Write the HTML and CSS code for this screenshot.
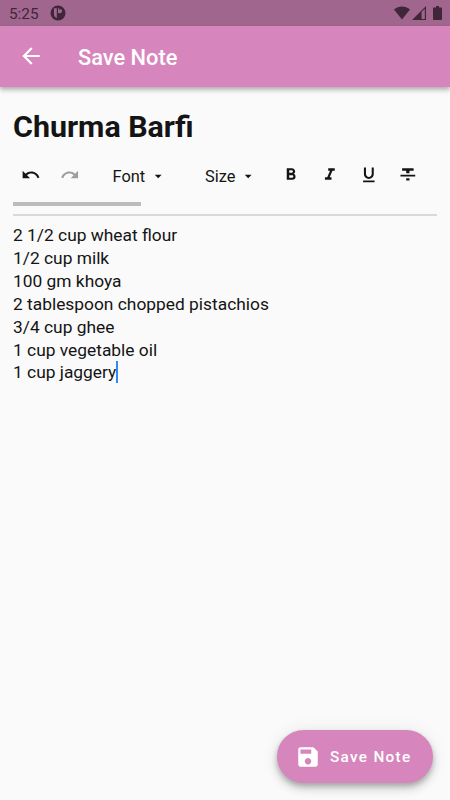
FILE: index.html
```
<!DOCTYPE html>
<html lang="en">

<head>
    <meta charset="UTF-8">
    <title>Save Note</title>
    <link rel="stylesheet" href="styles.css">
</head>

<body>
    <div class="status-bar">
        <span class="time">5:25</span>
        <svg class="app-dot" viewBox="0 0 16 16">
            <circle cx="8" cy="8" r="7.5" fill="#402638" />
            <path d="M4 3.2h2.8v9.8C5 12.5 4 11 4 9z" fill="#a0668e" />
            <path d="M8 3.2h1.2v1.3h2.6c.8 2-.3 3.8-2.2 3.8H8z" fill="#a0668e" />
        </svg>
        <div class="status-icons">
            <svg class="wifi" viewBox="0 0 16 14">
                <path d="M0 3.6C4.6-.5 11.4-.5 16 3.6L8 13.5z" />
            </svg>
            <svg class="signal" viewBox="0 0 14 14">
                <path fill-rule="evenodd" d="M14 0v14H0zM9.6 6v7h3.2V2.8z" />
            </svg>
            <svg class="battery" viewBox="0 0 9 14">
                <path d="M3 0h3v1.5h2.2c.5 0 .8.3.8.8v10.9c0 .5-.3.8-.8.8H.8c-.5 0-.8-.3-.8-.8V2.3c0-.5.3-.8.8-.8H3z" />
            </svg>
        </div>
    </div>

    <header class="app-bar">
        <svg class="back" viewBox="0 0 24 24">
            <path d="M20 11H7.83l5.59-5.59L12 4l-8 8 8 8 1.41-1.41L7.83 13H20v-2z" />
        </svg>
        <h1>Save Note</h1>
    </header>

    <main>
        <h2>Churma Barfi</h2>

        <div class="toolbar">
            <button class="tool">
                <svg viewBox="0 0 24 24"><path d="M12.5 8c-2.65 0-5.05.99-6.9 2.6L2 7v9h9l-3.62-3.62c1.39-1.16 3.16-1.88 5.12-1.88 3.54 0 6.55 2.31 7.6 5.5l2.37-.78C21.08 11.03 17.15 8 12.5 8z" /></svg>
            </button>
            <button class="tool disabled">
                <svg viewBox="0 0 24 24"><path d="M18.4 10.6C16.55 8.99 14.15 8 11.5 8c-4.65 0-8.58 3.03-9.96 7.22L3.9 16c1.05-3.19 4.05-5.5 7.6-5.5 1.95 0 3.73.72 5.12 1.88L13 16h9V7l-3.6 3.6z" /></svg>
            </button>
            <button class="dropdown font">
                <span>Font</span>
                <svg viewBox="0 0 24 24"><path d="M7 10l5 5 5-5z" /></svg>
            </button>
            <button class="dropdown size">
                <span>Size</span>
                <svg viewBox="0 0 24 24"><path d="M7 10l5 5 5-5z" /></svg>
            </button>
            <button class="tool">
                <svg viewBox="0 0 24 24"><path d="M15.6 10.79c.97-.67 1.65-1.77 1.65-2.79 0-2.26-1.75-4-4-4H7v14h7.04c2.09 0 3.71-1.7 3.71-3.79 0-1.52-.86-2.82-2.15-3.42zM10 6.5h3c.83 0 1.5.67 1.5 1.5s-.67 1.5-1.5 1.5h-3v-3zm3.5 9H10v-3h3.5c.83 0 1.5.67 1.5 1.5s-.67 1.5-1.5 1.5z" /></svg>
            </button>
            <button class="tool">
                <svg viewBox="0 0 24 24"><path d="M10 4v3h2.21l-3.42 8H6v3h8v-3h-2.21l3.42-8H18V4z" /></svg>
            </button>
            <button class="tool">
                <svg viewBox="0 0 24 24"><path d="M12 17c3.31 0 6-2.69 6-6V3h-2.5v8c0 1.93-1.57 3.5-3.5 3.5S8.5 12.93 8.5 11V3H6v8c0 3.31 2.69 6 6 6zm-7 2v2h14v-2H5z" /></svg>
            </button>
            <button class="tool">
                <svg viewBox="0 0 24 24"><path d="M10 19h4v-3h-4v3zM5 4v3h5v3h4V7h5V4H5zM3 14h18v-2H3v2z" /></svg>
            </button>
        </div>
        <div class="scroll-thumb"></div>
        <div class="divider"></div>

        <div class="note">
            <p>2 1/2 cup wheat flour</p>
            <p>1/2 cup milk</p>
            <p>100 gm khoya</p>
            <p>2 tablespoon chopped pistachios</p>
            <p>3/4 cup ghee</p>
            <p>1 cup vegetable oil</p>
            <p>1 cup jaggery<span class="cursor"></span></p>
        </div>
    </main>

    <button class="save">
        <svg viewBox="0 0 24 24"><path d="M17 3H5c-1.11 0-2 .9-2 2v14c0 1.1.89 2 2 2h14c1.1 0 2-.9 2-2V7l-4-4zm-5 16c-1.66 0-3-1.34-3-3s1.34-3 3-3 3 1.34 3 3-1.34 3-3 3zm3-10H5V5h10v4z" /></svg>
        <span>Save Note</span>
    </button>
</body>

</html>
```
FILE: styles.css
```
* {
    box-sizing: border-box;
}

body {
    margin: 0;
    height: 800px;
    overflow: hidden;
    background: #fafafa;
    color: #141414;
    font-family: Roboto, "Liberation Sans", sans-serif;
}

h1,
h2,
p {
    margin: 0;
}

button {
    border: none;
    padding: 0;
    background: none;
    color: inherit;
    font-family: inherit;
}

svg {
    display: block;
    flex: none;
    fill: currentColor;
}

.status-bar {
    display: flex;
    align-items: center;
    height: 26px;
    padding: 0 8px 0 9px;
    background: #a0668e;
    color: #402638;
}

.time {
    width: 41px;
    padding-top: 1px;
    font-size: 15.3px;
}

.app-dot {
    width: 16px;
    height: 16px;
}

.status-icons {
    display: flex;
    margin-left: auto;
}

.wifi {
    width: 16px;
    height: 14px;
}

.signal {
    width: 14px;
    height: 14px;
    margin-left: 2px;
}

.battery {
    width: 9px;
    height: 14px;
    margin-left: 7px;
}

.app-bar {
    display: flex;
    align-items: center;
    height: 61px;
    padding-left: 17.5px;
    background: #d686bd;
    color: #fff;
    box-shadow: 0 2px 4px rgba(0, 0, 0, .2), 0 4px 5px rgba(0, 0, 0, .13);
}

.back {
    width: 26px;
    height: 26px;
    margin-top: -1px;
}

.app-bar h1 {
    margin-left: 34.5px;
    padding-top: 1px;
    font-size: 21.8px;
    font-weight: 500;
}

main {
    padding: 0 13px;
}

h2 {
    padding-top: 22px;
    font-size: 30.4px;
    line-height: 36px;
    font-weight: 700;
}

.toolbar {
    display: flex;
    align-items: center;
    height: 39px;
    margin: 10px 0 0 -2px;
}

.tool {
    display: flex;
    justify-content: center;
    flex: none;
    width: 39px;
    padding-top: 1px;
}

.tool svg {
    width: 19.7px;
    height: 19.7px;
}

.disabled {
    color: #9e9e9e;
}

.dropdown {
    display: flex;
    align-items: center;
    flex: none;
    padding-top: 3px;
    font-size: 16.4px;
}

.dropdown svg {
    width: 16.4px;
    height: 16.4px;
    margin-left: 5px;
}

.font {
    width: 92.5px;
    padding-left: 23.5px;
}

.size {
    width: 90px;
    padding-left: 23.5px;
}

.scroll-thumb {
    width: 128px;
    height: 4px;
    margin-top: 8px;
    background: #bcbcbc;
}

.divider {
    height: 2px;
    margin-top: 8px;
    background: #d9d9d9;
}

.note {
    padding-top: 8.4px;
    font-size: 17.38px;
    line-height: 22.85px;
}

.cursor {
    display: inline-block;
    width: 2px;
    height: 22px;
    vertical-align: -5px;
    background: #2d8cf0;
}

.save {
    position: absolute;
    right: 17px;
    bottom: 17px;
    display: flex;
    align-items: center;
    width: 156px;
    height: 53px;
    padding-left: 18px;
    border-radius: 27px;
    background: #d686bd;
    color: #fff;
    font-size: 15.3px;
    font-weight: 500;
    letter-spacing: 1.3px;
    box-shadow: 0 3px 5px rgba(0, 0, 0, .2), 0 6px 10px rgba(0, 0, 0, .14), 0 1px 18px rgba(0, 0, 0, .08);
}

.save svg {
    width: 26px;
    height: 26px;
    margin-right: 9px;
}
```
